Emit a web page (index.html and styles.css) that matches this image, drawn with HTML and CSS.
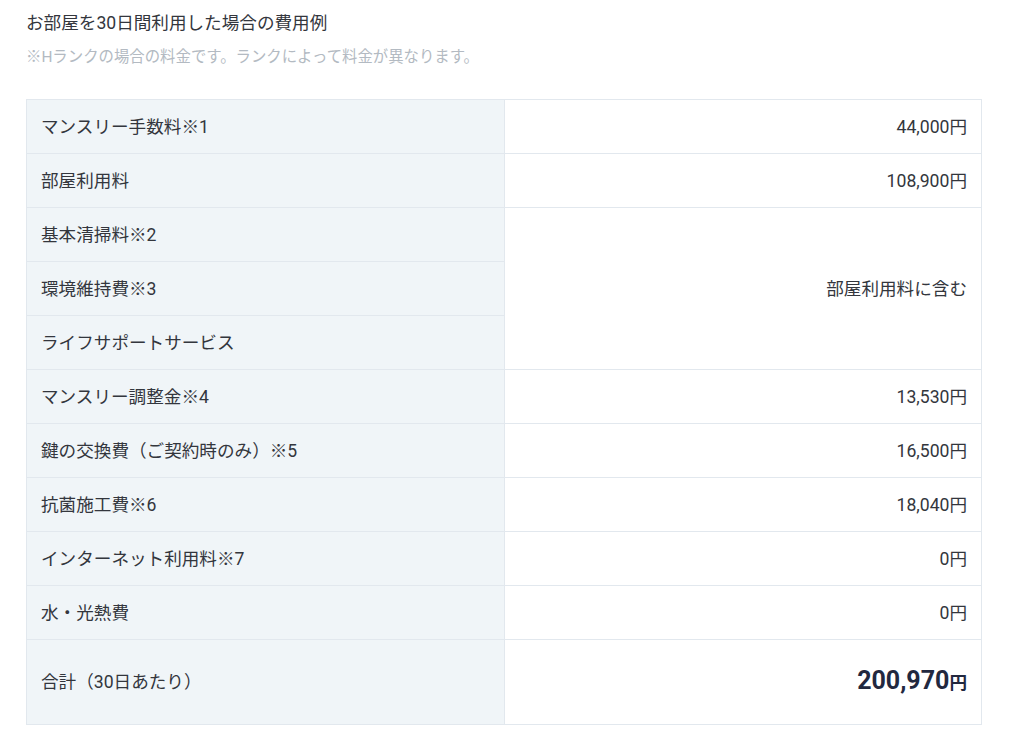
FILE: index.html
```html
<!DOCTYPE html>
<html lang="ja">
<head>
<meta charset="utf-8">
<link rel="stylesheet" href="styles.css">
</head>
<body>
<div class="wrap">
  <h2 class="title">お部屋を30日間利用した場合の費用例</h2>
  <p class="note">※Hランクの場合の料金です。ランクによって料金が異なります。</p>
  <table class="cost">
    <tbody>
      <tr><th>マンスリー手数料※1</th><td>44,000円</td></tr>
      <tr><th>部屋利用料</th><td>108,900円</td></tr>
      <tr><th>基本清掃料※2</th><td rowspan="3">部屋利用料に含む</td></tr>
      <tr><th>環境維持費※3</th></tr>
      <tr><th>ライフサポートサービス</th></tr>
      <tr><th>マンスリー調整金※4</th><td>13,530円</td></tr>
      <tr><th>鍵の交換費（ご契約時のみ）※5</th><td>16,500円</td></tr>
      <tr><th>抗菌施工費※6</th><td>18,040円</td></tr>
      <tr><th>インターネット利用料※7</th><td>0円</td></tr>
      <tr><th>水・光熱費</th><td>0円</td></tr>
      <tr class="total"><th>合計（30日あたり）</th><td><span class="num">200,970</span><span class="yen">円</span></td></tr>
    </tbody>
  </table>
</div>
</body>
</html>
```

FILE: styles.css
```css
html, body {
  margin: 0;
  padding: 0;
  background: #fff;
}
body {
  font-family: Roboto, "Noto Sans CJK JP", sans-serif;
  color: #333;
}
.wrap {
  padding: 10px 26px 0 26px;
}
.title {
  margin: 0;
  font-size: 17.6px;
  font-weight: 400;
  line-height: 26px;
  color: #33363d;
}
.note {
  margin: 10px 0 0 0;
  font-size: 15.4px;
  line-height: 22px;
  color: #b3bac2;
}
.cost {
  margin-top: 31px;
  width: 956px;
  border-collapse: collapse;
  font-size: 17.6px;
}
.cost th, .cost td {
  border: 1px solid #e2e8ee;
  height: 54px;
  padding: 0 14px;
  box-sizing: border-box;
  font-weight: 400;
  line-height: 26px;
}
.cost th {
  width: 478px;
  text-align: left;
  background: #f0f5f8;
  color: #33363d;
}
.cost td {
  text-align: right;
  background: #fff;
  color: #33363d;
}
.cost .total th, .cost .total td {
  height: 85px;
}
.cost .num {
  font-size: 25px;
  font-weight: 700;
  color: #22283f;
}
.cost .yen {
  font-size: 17.6px;
  font-weight: 700;
  color: #22283f;
}
```
